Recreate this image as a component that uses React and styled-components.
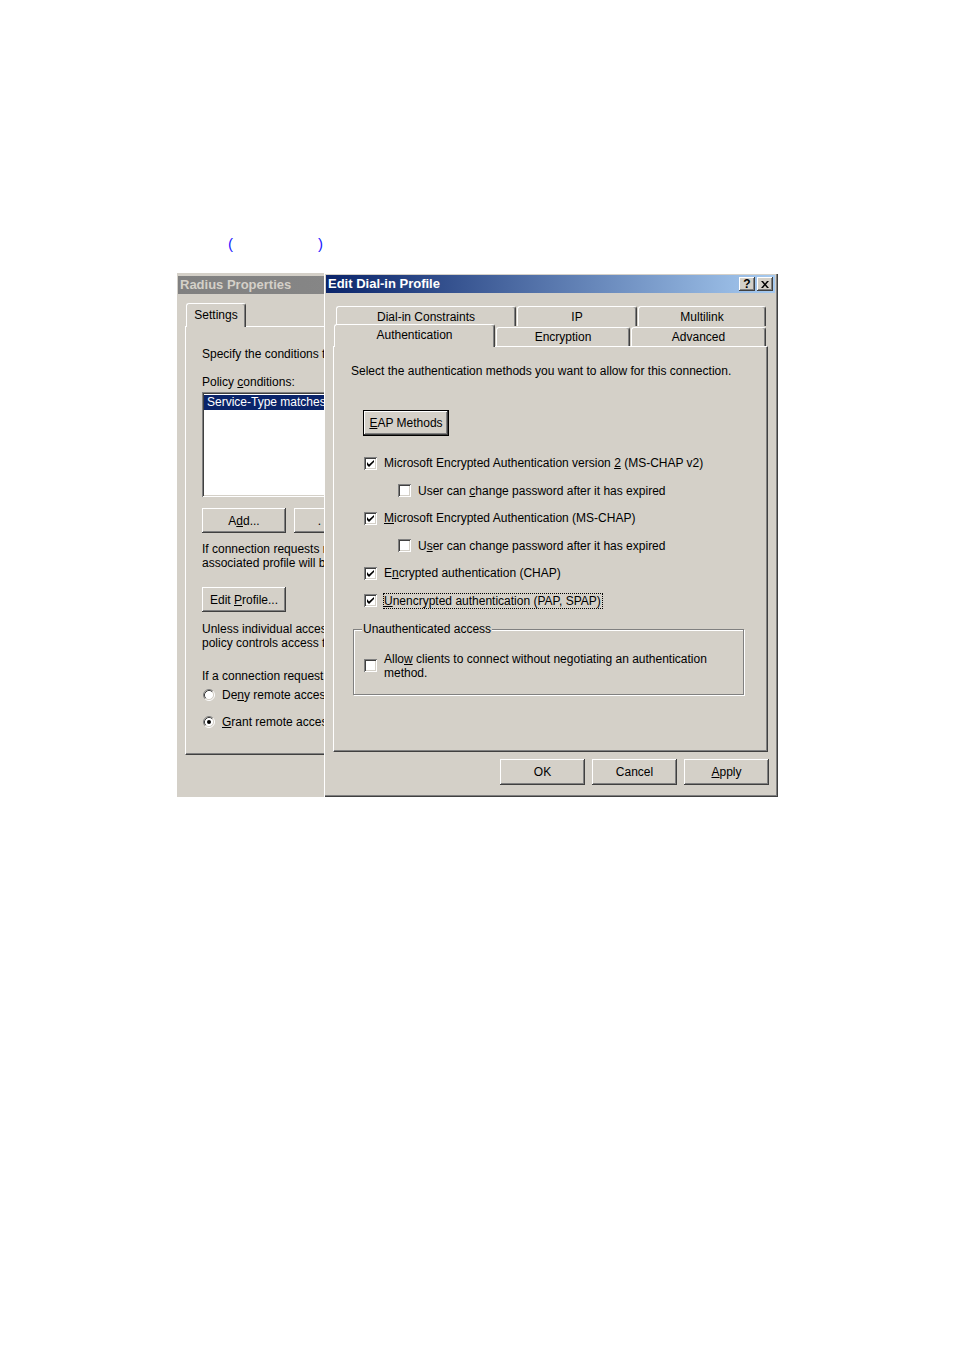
import React from 'react';
import styled, { createGlobalStyle, css } from 'styled-components';

const FACE = '#d4d0c8';

const GlobalStyle = createGlobalStyle`
  html, body {
    margin: 0;
    padding: 0;
    background: #fff;
  }
  body {
    font-family: "Liberation Sans", Arial, sans-serif;
    font-size: 12px;
    line-height: 14px;
    color: #000;
  }
`;

const raisedEdge = css`
  box-shadow: inset -1px -1px #404040, inset 1px 1px #fff, inset -2px -2px #808080, inset 2px 2px ${FACE};
`;

const sunkenEdge = css`
  box-shadow: inset 1px 1px #808080, inset -1px -1px #fff, inset 2px 2px #404040, inset -2px -2px ${FACE};
`;

const Page = styled.div`
  width: 954px;
  min-height: 1350px;
  padding-top: 236px;
  box-sizing: border-box;
`;

const Caption = styled.div`
  display: flex;
  gap: 85px;
  padding-left: 228px;
  height: 16px;
  font-size: 15px;
  line-height: 16px;
  color: #2020ff;
`;

const Desktop = styled.div`
  display: flex;
  margin: 21px 0 0 177px;
  height: 524px;
`;

const BackWindow = styled.div`
  flex: none;
  width: 147px;
  overflow: hidden;
  background: ${FACE};
  padding: 3px 0 0 1px;
  box-sizing: border-box;
`;

const Dialog = styled.div`
  flex: none;
  width: 454px;
  box-sizing: border-box;
  padding: 2px 3px 3px 2px;
  background: ${FACE};
  box-shadow: inset 1px 1px #fff, inset -1px -1px #404040, inset -2px -2px #808080;
`;

const TitleBar = styled.div`
  display: flex;
  align-items: center;
  justify-content: space-between;
  width: ${p => (p.$width ? `${p.$width}px` : 'auto')};
  height: 18px;
  padding: 0 2px;
  box-sizing: border-box;
  background: ${p =>
    p.$active
      ? 'linear-gradient(to right, #0a246a, #a6caf0)'
      : 'linear-gradient(to right, #808080, #909090)'};
  color: ${p => (p.$active ? '#fff' : '#d4d0c8')};
  font-size: 13px;
  font-weight: bold;
  white-space: nowrap;
`;

const CaptionButtons = styled.div`
  display: flex;
  gap: 2px;
`;

const CaptionButton = styled.span`
  display: flex;
  align-items: center;
  justify-content: center;
  width: 16px;
  height: 14px;
  box-sizing: border-box;
  background: ${FACE};
  ${raisedEdge};
  color: #000;
  font-size: 12px;
  line-height: 12px;
  font-weight: bold;
`;

const Body = styled.div`
  padding: ${p => p.$pad};
`;

const TabRow = styled.div`
  display: flex;
  gap: 1px;
  height: ${p => p.$h || 20}px;
  padding-left: ${p => p.$indent}px;
`;

const Tab = styled.div`
  flex: none;
  box-sizing: border-box;
  display: flex;
  align-items: center;
  justify-content: center;
  width: ${p => p.$w}px;
  height: ${p => p.$h}px;
  margin-top: ${p => p.$top || 0}px;
  background: ${FACE};
  border-top: 1px solid #fff;
  border-left: 1px solid #fff;
  border-right: 1px solid #404040;
  border-radius: 3px 3px 0 0;
  box-shadow: inset -1px 0 #808080;
  white-space: nowrap;
  ${p =>
    p.$selected &&
    css`
      position: relative;
      z-index: 1;
      padding-bottom: 2px;
    `}
`;

const Panel = styled.div`
  box-sizing: border-box;
  width: ${p => p.$w}px;
  height: ${p => p.$h}px;
  border: 1px solid;
  border-color: #fff #404040 #404040 #fff;
  box-shadow: inset -1px -1px #808080;
  padding: ${p => p.$pad};
  white-space: nowrap;
`;

const Text = styled.div`
  margin-top: ${p => p.$mt || 0}px;
  margin-left: ${p => p.$ml || 0}px;
  white-space: nowrap;
`;

const Button = styled.div`
  flex: none;
  box-sizing: border-box;
  display: flex;
  align-items: center;
  justify-content: center;
  width: ${p => p.$w || 85}px;
  height: ${p => p.$h || 26}px;
  margin-top: ${p => p.$mt || 0}px;
  margin-left: ${p => p.$ml || 0}px;
  background: ${FACE};
  ${raisedEdge};
  white-space: nowrap;
  ${p =>
    p.$default &&
    css`
      border: 1px solid #000;
      box-shadow: inset -1px -1px #404040, inset 1px 1px #fff, inset -2px -2px #808080;
    `}
`;

const ButtonRow = styled.div`
  display: flex;
  gap: ${p => p.$gap || 8}px;
  margin-top: ${p => p.$mt || 0}px;
  width: ${p => (p.$w ? `${p.$w}px` : 'auto')};
  justify-content: ${p => p.$justify || 'flex-start'};
`;

const ListBox = styled.div`
  box-sizing: border-box;
  width: 200px;
  height: 105px;
  margin-top: ${p => p.$mt || 0}px;
  padding: 3px 3px 3px 2px;
  background: #fff;
  ${sunkenEdge};
`;

const ListItem = styled.div`
  padding-left: 3px;
  background: ${p => (p.$selected ? '#0a246a' : 'transparent')};
  color: ${p => (p.$selected ? '#fff' : '#000')};
  line-height: 15px;
`;

const OptionList = styled.div`
  display: flex;
  flex-direction: column;
  gap: 13.6px;
  margin: ${p => p.$mt}px 0 0 13px;
`;

const OptionRow = styled.label`
  display: flex;
  align-items: center;
  gap: 7px;
  margin-left: ${p => (p.$sub ? 34 : 0)}px;
  margin-top: ${p => p.$mt || 0}px;
`;

const Box = styled.span`
  flex: none;
  display: flex;
  align-items: center;
  justify-content: center;
  width: 13px;
  height: 13px;
  box-sizing: border-box;
  background: #fff;
  ${sunkenEdge};
`;

const Focus = styled.span`
  outline: 1px dotted #000;
  padding: 0 1px 0 0;
`;

const Group = styled.div`
  position: relative;
  box-sizing: border-box;
  width: 391px;
  height: 66px;
  margin: 21px 0 0 2px;
  border: 1px solid #808080;
  box-shadow: inset 1px 1px #fff, 1px 1px #fff;
  padding: 22px 0 0 10px;
`;

const GroupLabel = styled.span`
  position: absolute;
  top: -8px;
  left: 8px;
  padding: 0 1px;
  background: ${FACE};
`;

const RadioRow = styled.div`
  display: flex;
  align-items: center;
  gap: 7px;
  margin: ${p => p.$mt}px 0 0 1px;
`;

const Check = ({ checked }) => (
  <Box>
    {checked && (
      <svg width="7" height="7" viewBox="0 0 7 7">
        <path d="M0 2v3l2 2 5-5V-0L2 4.6z" fill="#000" />
      </svg>
    )}
  </Box>
);

const Radio = ({ checked }) => (
  <svg width="12" height="12" viewBox="0 0 12 12" style={{ flex: 'none' }}>
    <circle cx="6" cy="6" r="4.5" fill="#fff" />
    <path d="M2.11 9.89A5.5 5.5 0 0 1 9.89 2.11" fill="none" stroke="#808080" />
    <path d="M9.89 2.11A5.5 5.5 0 0 1 2.11 9.89" fill="none" stroke="#fff" />
    <path d="M2.82 9.18A4.5 4.5 0 0 1 9.18 2.82" fill="none" stroke="#404040" />
    <path d="M9.18 2.82A4.5 4.5 0 0 1 2.82 9.18" fill="none" stroke="#d4d0c8" />
    {checked && <circle cx="6" cy="6" r="2" fill="#000" />}
  </svg>
);

const CloseGlyph = () => (
  <svg width="8" height="7" viewBox="0 0 8 7">
    <path d="M0 0h2l2 2.4L6 0h2L5 3.5 8 7H6L4 4.6 2 7H0l3-3.5z" fill="#000" />
  </svg>
);

const RadiusProperties = () => (
  <BackWindow>
    <TitleBar $width={400}>Radius Properties</TitleBar>
    <Body $pad="9px 0 0 7px">
      <TabRow $indent={1} $h={23}>
        <Tab $w={60} $h={24} $selected>Settings</Tab>
      </TabRow>
      <Panel $w={380} $h={429} $pad="20px 0 0 16px">
        <Text>Specify the conditions that connection requests must match.</Text>
        <Text $mt={14}>Policy <u>c</u>onditions:</Text>
        <ListBox $mt={3}>
          <ListItem $selected>Service-Type matches "Framed"</ListItem>
        </ListBox>
        <ButtonRow $mt={11} $gap={8}>
          <Button $w={84} $h={25}><span>A<u>d</u>d...</span></Button>
          <Button $w={84} $h={25}><span>.&nbsp;&nbsp;&nbsp;&nbsp;&nbsp;&nbsp;&nbsp;&nbsp;&nbsp;&nbsp;</span></Button>
        </ButtonRow>
        <Text $mt={9}>
          If connection requests match the conditions specified in this policy, the
          <br />
          associated profile will be applied to the connection.
        </Text>
        <Button $w={84} $h={25} $mt={17}><span>Edit <u>P</u>rofile...</span></Button>
        <Text $mt={10}>
          Unless individual access permissions are specified in the user profile, this
          <br />
          policy controls access to the network.
        </Text>
        <Text $mt={19}>If a connection request matches the specified conditions:</Text>
        <RadioRow $mt={5}>
          <Radio />
          <span>De<u>n</u>y remote access permission</span>
        </RadioRow>
        <RadioRow $mt={13}>
          <Radio checked />
          <span><u>G</u>rant remote access permission</span>
        </RadioRow>
      </Panel>
    </Body>
  </BackWindow>
);

const EditDialInProfile = () => (
  <Dialog>
    <TitleBar $active>
      <span>Edit Dial-in Profile</span>
      <CaptionButtons>
        <CaptionButton>?</CaptionButton>
        <CaptionButton><CloseGlyph /></CaptionButton>
      </CaptionButtons>
    </TitleBar>
    <Body $pad="13px 0 0 7px">
      <TabRow $indent={3}>
        <Tab $w={180} $h={20}>Dial-in Constraints</Tab>
        <Tab $w={120} $h={20}>IP</Tab>
        <Tab $w={128} $h={20}>Multilink</Tab>
      </TabRow>
      <TabRow $indent={1}>
        <Tab $w={161} $h={23} $top={-2} $selected>Authentication</Tab>
        <Tab $w={134} $h={19} $top={1}>Encryption</Tab>
        <Tab $w={135} $h={19} $top={1}>Advanced</Tab>
      </TabRow>
      <Panel $w={435} $h={406} $pad="17px 0 0 17px">
        <Text>Select the authentication methods you want to allow for this connection.</Text>
        <Button $w={86} $h={26} $mt={32} $ml={12} $default>
          <span><u>E</u>AP Methods</span>
        </Button>
        <OptionList $mt={20}>
          <OptionRow>
            <Check checked />
            <span>Microsoft Encrypted Authentication version <u>2</u> (MS-CHAP v2)</span>
          </OptionRow>
          <OptionRow $sub>
            <Check />
            <span>User can <u>c</u>hange password after it has expired</span>
          </OptionRow>
          <OptionRow>
            <Check checked />
            <span><u>M</u>icrosoft Encrypted Authentication (MS-CHAP)</span>
          </OptionRow>
          <OptionRow $sub>
            <Check />
            <span>U<u>s</u>er can change password after it has expired</span>
          </OptionRow>
          <OptionRow>
            <Check checked />
            <span>E<u>n</u>crypted authentication (CHAP)</span>
          </OptionRow>
          <OptionRow>
            <Check checked />
            <Focus><u>U</u>nencrypted authentication (PAP, SPAP)</Focus>
          </OptionRow>
        </OptionList>
        <Group>
          <GroupLabel>Unauthenticated access</GroupLabel>
          <OptionRow>
            <Check />
            <span>
              Allo<u>w</u> clients to connect without negotiating an authentication
              <br />
              method.
            </span>
          </OptionRow>
        </Group>
      </Panel>
      <ButtonRow $mt={7} $gap={7} $w={436} $justify="flex-end">
        <Button>OK</Button>
        <Button>Cancel</Button>
        <Button><span><u>A</u>pply</span></Button>
      </ButtonRow>
    </Body>
  </Dialog>
);

const App = () => (
  <>
    <GlobalStyle />
    <Page>
      <Caption>
        <span>(</span>
        <span>)</span>
      </Caption>
      <Desktop>
        <RadiusProperties />
        <EditDialInProfile />
      </Desktop>
    </Page>
  </>
);

export default App;
